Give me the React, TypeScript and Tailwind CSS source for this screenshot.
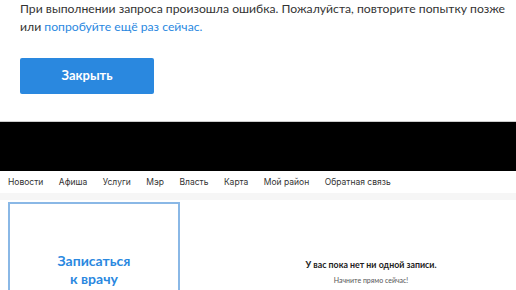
export default function App() {
  return (
    <div className="w-[516px] h-[290px] overflow-hidden bg-white font-['Lato',sans-serif]">
      <section className="h-[121px] px-5">
        <p className="text-[12.2px] leading-[18px] text-[#333] whitespace-nowrap">
          При выполнении запроса произошла ошибка. Пожалуйста, повторите попытку позже
          <br />
          или <a className="text-[#2a88df]">попробуйте ещё раз сейчас.</a>
        </p>
        <button className="mt-[22px] w-[134px] h-[36px] rounded-[2px] bg-[#2a88df] text-white text-[13px] font-bold">
          Закрыть
        </button>
      </section>

      <div className="h-[50px] bg-black border-t border-[#ccc]" />

      <nav className="h-[29px] flex items-center gap-[15.5px] px-2 text-[8.5px] text-[#333] font-['Inter',sans-serif] border-b-[7px] border-[#f6f6f6]">
        <NavLinks />
      </nav>

      <div className="flex pt-[2px] px-2">
        <div className="w-[172px] h-[136px] border-2 border-[#8ab8e6] flex items-center justify-center">
          <div className="text-center text-[14px] leading-[18px] font-bold text-[#2a88df]">
            Записаться
            <br />к врачу
          </div>
        </div>
        <div className="flex-1 pl-[54px] pt-[56px] text-center">
          <div className="text-[8.8px] font-bold text-[#222]">У вас пока нет ни одной записи.</div>
          <div className="text-[7px] text-[#555] mt-[4px]">Начните прямо сейчас!</div>
        </div>
      </div>
    </div>
  );
}

function NavLinks() {
  return (
    <>
      <a>Новости</a>
      <a>Афиша</a>
      <a>Услуги</a>
      <a>Мэр</a>
      <a>Власть</a>
      <a>Карта</a>
      <a>Мой район</a>
      <a>Обратная связь</a>
    </>
  );
}
